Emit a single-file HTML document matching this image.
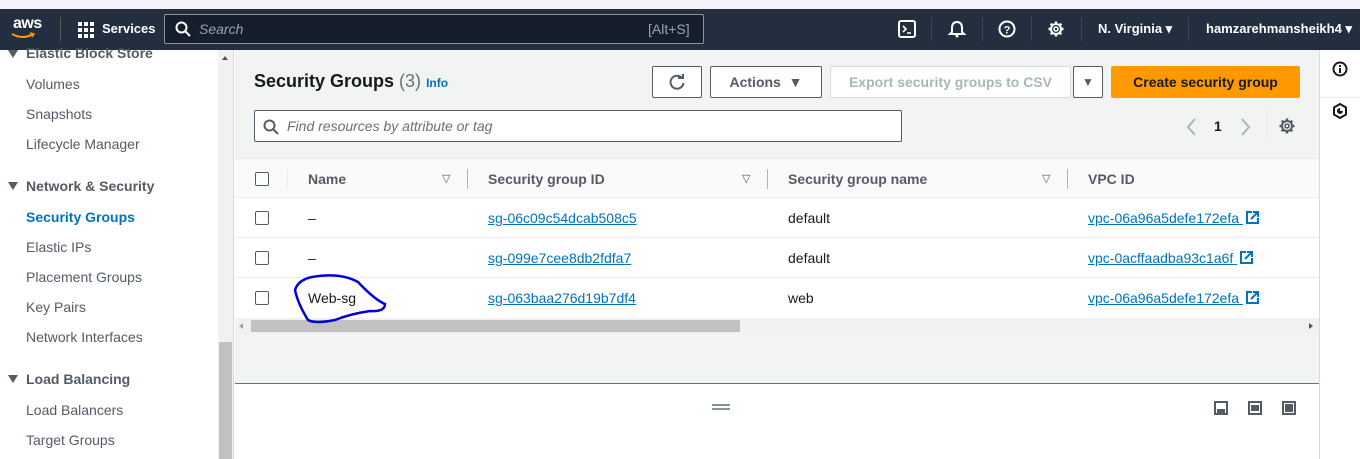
<!DOCTYPE html>
<html><head><style>
*{box-sizing:border-box;margin:0;padding:0}
body{width:1360px;height:459px;overflow:hidden;font-family:"Liberation Sans",sans-serif;font-size:14px;color:#16191f;background:#fff;position:relative}
.abs{position:absolute}
.top{left:0;top:0;width:1360px;height:9px;background:#f3f3f7}
.hdr{left:0;top:9px;width:1360px;height:41px;background:#232f3e;color:#fff}
.side{left:0;top:50px;width:218px;height:409px;background:#fff}
.side div{position:absolute;left:26px;font-size:14px;color:#545b64}
.side .h{left:26px;font-weight:bold;color:#545b64}
.tri{position:absolute;left:8px;width:0;height:0;border-left:5px solid transparent;border-right:5px solid transparent;border-top:8px solid #545b64}
.sb{left:218px;top:50px;width:16px;height:409px;background:#f1f1f1;border-right:1px solid #d5dbdb}
.main{left:235px;top:50px;width:1084px;height:334px;background:#f2f3f3}
.link{color:#0073bb;text-decoration:underline}
.btn{position:absolute;height:32px;border:1px solid #545b64;border-radius:2px;background:#fff;font-weight:bold;font-size:14px;display:flex;align-items:center;justify-content:center}
.row{position:absolute;left:235px;width:1084px;height:40px;background:#fff;border-bottom:1px solid #eaeded}
.cb{position:absolute;left:20px;top:13px;width:14px;height:14px;border:1px solid #545b64;border-radius:2px;background:#fff}
.cell{position:absolute;top:12px;font-size:14px}
.hd{font-weight:bold;color:#545b64}
.sep{position:absolute;top:10px;width:1px;height:20px;background:#aab7b8}
.ext{display:inline-block;vertical-align:-2px;margin-left:3px}
</style></head><body>
<svg width="0" height="0" style="position:absolute"><defs>
<g id="gear"><circle cx="9" cy="9" r="5" stroke-width="2" fill="none"/><circle cx="9" cy="9" r="2" stroke-width="1.6" fill="none"/><path d="M9 1.5V4M9 14V16.5M1.5 9H4M14 9H16.5M3.7 3.7L5.5 5.5M12.5 12.5L14.3 14.3M14.3 3.7L12.5 5.5M5.5 12.5L3.7 14.3" stroke-width="2.4"/></g>
<g id="ext"><path d="M6 1H1V12H12V7" stroke="#0073bb" stroke-width="2" fill="none"/><path d="M7 1H12V6M12 1L5 8" stroke="#0073bb" stroke-width="2" fill="none"/></g>
</defs></svg>
<div class="abs top"></div>
<div class="abs hdr">
 <div class="abs" style="left:13px;top:6px;font-size:16px;font-weight:bold;letter-spacing:-0.5px">aws</div>
 <svg class="abs" style="left:11px;top:23px" width="24" height="8"><path d="M1 2 Q12 8 22 2" stroke="#ff9900" stroke-width="2" fill="none"/><path d="M19 1 L23 2 L21 5" stroke="#ff9900" stroke-width="1.5" fill="none"/></svg>
 <div class="abs" style="left:60px;top:8px;width:1px;height:24px;background:#545b64"></div>
 <svg class="abs" style="left:78px;top:13px" width="16" height="16" fill="#fff"><rect x="0" y="0" width="4" height="4"/><rect x="6" y="0" width="4" height="4"/><rect x="12" y="0" width="4" height="4"/><rect x="0" y="6" width="4" height="4"/><rect x="6" y="6" width="4" height="4"/><rect x="12" y="6" width="4" height="4"/><rect x="0" y="12" width="4" height="4"/><rect x="6" y="12" width="4" height="4"/><rect x="12" y="12" width="4" height="4"/></svg>
 <div class="abs" style="left:102px;top:12px;font-size:13px;font-weight:bold">Services</div>
 <div class="abs" style="left:164px;top:5px;width:540px;height:30px;border:1px solid #879596;border-radius:2px;background:#161e2d"></div>
 <svg class="abs" style="left:175px;top:12px" width="16" height="16"><circle cx="6.5" cy="6.5" r="5" stroke="#fff" stroke-width="2" fill="none"/><path d="M10 10 L15 15" stroke="#fff" stroke-width="2"/></svg>
 <div class="abs" style="left:199px;top:12px;font-style:italic;color:#95a5a6">Search</div>
 <div class="abs" style="left:648px;top:12px;color:#95a5a6">[Alt+S]</div>
 <svg class="abs" style="left:898px;top:11px" width="18" height="18"><rect x="1" y="1" width="16" height="16" rx="2" stroke="#fff" stroke-width="2" fill="none"/><path d="M5 6 L8 9 L5 12 M9 13 H13" stroke="#fff" stroke-width="1.6" fill="none"/></svg>
 <div class="abs" style="left:931px;top:8px;width:1px;height:24px;background:#414750"></div>
 <svg class="abs" style="left:947px;top:10px" width="20" height="20"><path d="M10 3 Q5 3 5 9 L5 13 L3 15 H17 L15 13 L15 9 Q15 3 10 3Z" stroke="#fff" stroke-width="2" fill="none"/><circle cx="10" cy="17" r="1.5" fill="#fff"/></svg>
 <div class="abs" style="left:982px;top:8px;width:1px;height:24px;background:#414750"></div>
 <svg class="abs" style="left:998px;top:11px" width="18" height="18"><circle cx="9" cy="9" r="7.5" stroke="#fff" stroke-width="2" fill="none"/><text x="9" y="13.5" font-size="11" font-weight="bold" fill="#fff" text-anchor="middle" font-family="Liberation Sans">?</text></svg>
 <div class="abs" style="left:1031px;top:8px;width:1px;height:24px;background:#414750"></div>
 <svg class="abs" style="left:1047px;top:11px" width="18" height="18" stroke="#fff"><use href="#gear"/></svg>
 <div class="abs" style="left:1081px;top:8px;width:1px;height:24px;background:#414750"></div>
 <div class="abs" style="left:1098px;top:12px;font-size:13px;font-weight:bold">N. Virginia ▾</div>
 <div class="abs" style="left:1188px;top:8px;width:1px;height:24px;background:#414750"></div>
 <div class="abs" style="left:1206px;top:12px;font-size:13px;font-weight:bold">hamzarehmansheikh4 ▾</div>
</div>

<div class="abs side">
 <span class="tri" style="top:0px"></span><div class="h" style="top:-5px">Elastic Block Store</div>
 <div style="top:26px">Volumes</div>
 <div style="top:56px">Snapshots</div>
 <div style="top:86px">Lifecycle Manager</div>
 <span class="tri" style="top:132px"></span><div class="h" style="top:128px">Network &amp; Security</div>
 <div style="top:159px;color:#0073bb;font-weight:bold">Security Groups</div>
 <div style="top:189px">Elastic IPs</div>
 <div style="top:219px">Placement Groups</div>
 <div style="top:249px">Key Pairs</div>
 <div style="top:279px">Network Interfaces</div>
 <span class="tri" style="top:325px"></span><div class="h" style="top:321px">Load Balancing</div>
 <div style="top:352px">Load Balancers</div>
 <div style="top:382px">Target Groups</div>
</div>
<div class="abs sb"><div class="abs" style="left:4px;top:6px;width:0;height:0;border-left:3px solid transparent;border-right:3px solid transparent;border-bottom:4px solid #505050"></div><div class="abs" style="left:1px;top:292px;width:13px;height:117px;background:#c1c1c1"></div></div>

<div class="abs main">
 <div class="abs" style="left:19px;top:21px;font-size:18px;font-weight:bold;color:#16191f">Security Groups <span style="font-weight:normal;color:#687078">(3)</span> <span style="font-size:12px;color:#0073bb">Info</span></div>
 <div class="btn" style="left:417px;top:16px;width:50px"><svg width="18" height="18"><path d="M14 5 A6.5 6.5 0 1 0 15.5 10" stroke="#545b64" stroke-width="2" fill="none"/><path d="M10 4 H15 V0" stroke="#545b64" stroke-width="2" fill="none" transform="translate(0,1)"/></svg></div>
 <div class="btn" style="left:475px;top:16px;width:112px;color:#545b64">Actions &nbsp;▼</div>
 <div class="btn" style="left:595px;top:16px;width:241px;border-color:#d5dbdb;color:#aab7b8">Export security groups to CSV</div>
 <div class="btn" style="left:838px;top:16px;width:30px;font-size:12px;color:#545b64">▼</div>
 <div class="btn" style="left:876px;top:16px;width:189px;background:#ff9900;border-color:#ff9900;color:#16191f">Create security group</div>
 <div class="abs" style="left:19px;top:60px;width:648px;height:32px;border:1px solid #545b64;border-radius:2px;background:#fff"></div>
 <svg class="abs" style="left:28px;top:69px" width="16" height="16"><circle cx="6.5" cy="6.5" r="5" stroke="#545b64" stroke-width="2" fill="none"/><path d="M10 10 L15 15" stroke="#545b64" stroke-width="2"/></svg>
 <div class="abs" style="left:52px;top:68px;font-style:italic;color:#687078">Find resources by attribute or tag</div>
 <svg class="abs" style="left:950px;top:68px" width="12" height="18"><path d="M10 1 L3 9 L10 17" stroke="#aab7b8" stroke-width="2" fill="none"/></svg>
 <div class="abs" style="left:979px;top:68px;font-weight:bold">1</div>
 <svg class="abs" style="left:1005px;top:68px" width="12" height="18"><path d="M2 1 L9 9 L2 17" stroke="#aab7b8" stroke-width="2" fill="none"/></svg>
 <div class="abs" style="left:1032px;top:60px;width:1px;height:30px;background:#eaeded"></div>
 <svg class="abs" style="left:1043px;top:67px" width="18" height="18" stroke="#545b64"><use href="#gear"/></svg>
</div>

<div class="row" style="top:158px;background:#fafafa;border-top:1px solid #eaeded">
 <div class="cb"></div>
 <div class="sep" style="left:52px;background:#eaeded"></div>
 <div class="cell hd" style="left:73px">Name</div><div class="cell" style="left:207px;color:#545b64;font-size:11px;top:13px">▽</div>
 <div class="sep" style="left:232px"></div>
 <div class="cell hd" style="left:253px">Security group ID</div><div class="cell" style="left:507px;color:#545b64;font-size:11px;top:13px">▽</div>
 <div class="sep" style="left:532px"></div>
 <div class="cell hd" style="left:553px">Security group name</div><div class="cell" style="left:807px;color:#545b64;font-size:11px;top:13px">▽</div>
 <div class="sep" style="left:832px"></div>
 <div class="cell hd" style="left:853px">VPC ID</div>
</div>
<div class="row" style="top:198px"><div class="cb"></div><div class="cell" style="left:73px">–</div><div class="cell link" style="left:253px">sg-06c09c54dcab508c5</div><div class="cell" style="left:553px">default</div><div class="cell" style="left:853px"><span class="link">vpc-06a96a5defe172efa </span><svg class="ext" width="14" height="14"><use href="#ext"/></svg></div></div>
<div class="row" style="top:238px"><div class="cb"></div><div class="cell" style="left:73px">–</div><div class="cell link" style="left:253px">sg-099e7cee8db2fdfa7</div><div class="cell" style="left:553px">default</div><div class="cell" style="left:853px"><span class="link">vpc-0acffaadba93c1a6f </span><svg class="ext" width="14" height="14"><use href="#ext"/></svg></div></div>
<div class="row" style="top:278px;border-bottom:none"><div class="cb"></div><div class="cell" style="left:73px">Web-sg</div><div class="cell link" style="left:253px">sg-063baa276d19b7df4</div><div class="cell" style="left:553px">web</div><div class="cell" style="left:853px"><span class="link">vpc-06a96a5defe172efa </span><svg class="ext" width="14" height="14"><use href="#ext"/></svg></div></div>
<div class="abs" style="left:235px;top:318px;width:1084px;height:16px;background:#f1f1f1"><div class="abs" style="left:16px;top:2px;width:489px;height:12px;background:#c1c1c1"></div><div class="abs" style="left:4px;top:5px;border-top:3px solid transparent;border-bottom:3px solid transparent;border-right:4px solid #a0a0a0"></div><div class="abs" style="left:1074px;top:5px;border-top:3px solid transparent;border-bottom:3px solid transparent;border-left:4px solid #505050"></div></div>
<svg class="abs" style="left:290px;top:272px" width="100" height="56"><path d="M22 5 Q50 0 68 10 Q85 28 95 32 Q95 40 80 39 Q60 42 45 48 Q25 52 18 48 Q8 32 5 18 Q8 8 22 5Z" stroke="#0000dd" stroke-width="2.5" fill="none"/></svg>
<div class="abs" style="left:235px;top:383px;width:1084px;height:1px;background:#687078"></div>
<div class="abs" style="left:712px;top:404px;width:18px;height:2px;background:#879596"></div>
<div class="abs" style="left:712px;top:408px;width:18px;height:2px;background:#879596"></div>
<svg class="abs" style="left:1214px;top:401px" width="100" height="15"><rect x="1" y="1" width="12" height="12" stroke="#545b64" stroke-width="2" fill="none"/><rect x="3" y="8" width="8" height="4" fill="#545b64"/><rect x="35" y="1" width="12" height="12" stroke="#545b64" stroke-width="2" fill="none"/><rect x="37" y="4" width="8" height="6" fill="#545b64"/><rect x="69" y="1" width="12" height="12" stroke="#545b64" stroke-width="2" fill="none"/><rect x="71" y="3" width="8" height="8" fill="#545b64"/></svg>
<div class="abs" style="left:1319px;top:50px;width:1px;height:409px;background:#d5dbdb"></div>
<div class="abs" style="left:1320px;top:97px;width:40px;height:1px;background:#eaeded"></div>
<svg class="abs" style="left:1332px;top:61px" width="16" height="16"><circle cx="8" cy="8" r="6.5" stroke="#16191f" stroke-width="2" fill="none"/><rect x="7" y="7" width="2" height="5" fill="#16191f"/><rect x="7" y="4" width="2" height="2" fill="#16191f"/></svg>
<svg class="abs" style="left:1332px;top:102px" width="16" height="18"><path d="M8 2 L14 5.5 V12.5 L8 16 L2 12.5 V5.5Z" stroke="#16191f" stroke-width="2" fill="none"/><path d="M8 6 A3 3 0 1 0 11 9 L8 9Z" fill="#16191f"/></svg>
</body></html>
